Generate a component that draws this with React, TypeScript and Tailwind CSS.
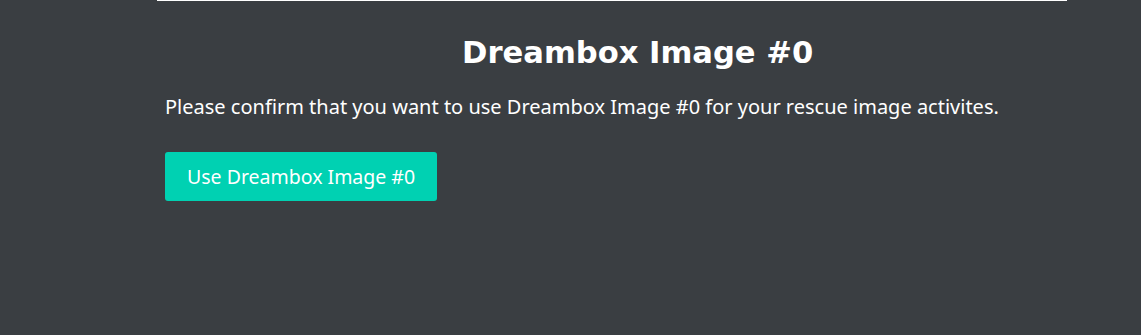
export default function App() {
  return (
    <div className="min-h-[335px] w-full bg-[#3a3e42]" style={{ fontFamily: '"Noto Sans", "Open Sans", sans-serif' }}>
      <div className="ml-[157px] w-[910px] border-t border-white">
        <div className="px-2 pt-[34px]">
          <h1
            className="pl-[297px] text-[30.6px] font-bold leading-[36px] text-white"
            style={{ fontFamily: '"DejaVu Sans", Verdana, sans-serif' }}
          >
            Dreambox Image #0
          </h1>
          <p className="mt-[22px] text-[20px] leading-[28px] text-white">
            Please confirm that you want to use Dreambox Image #0 for your rescue image activites.
          </p>
          <button className="mt-[31px] h-[49px] rounded-[3px] bg-[#00d1b2] px-[22px] text-[19.5px] text-white">
            Use Dreambox Image #0
          </button>
        </div>
      </div>
    </div>
  );
}
